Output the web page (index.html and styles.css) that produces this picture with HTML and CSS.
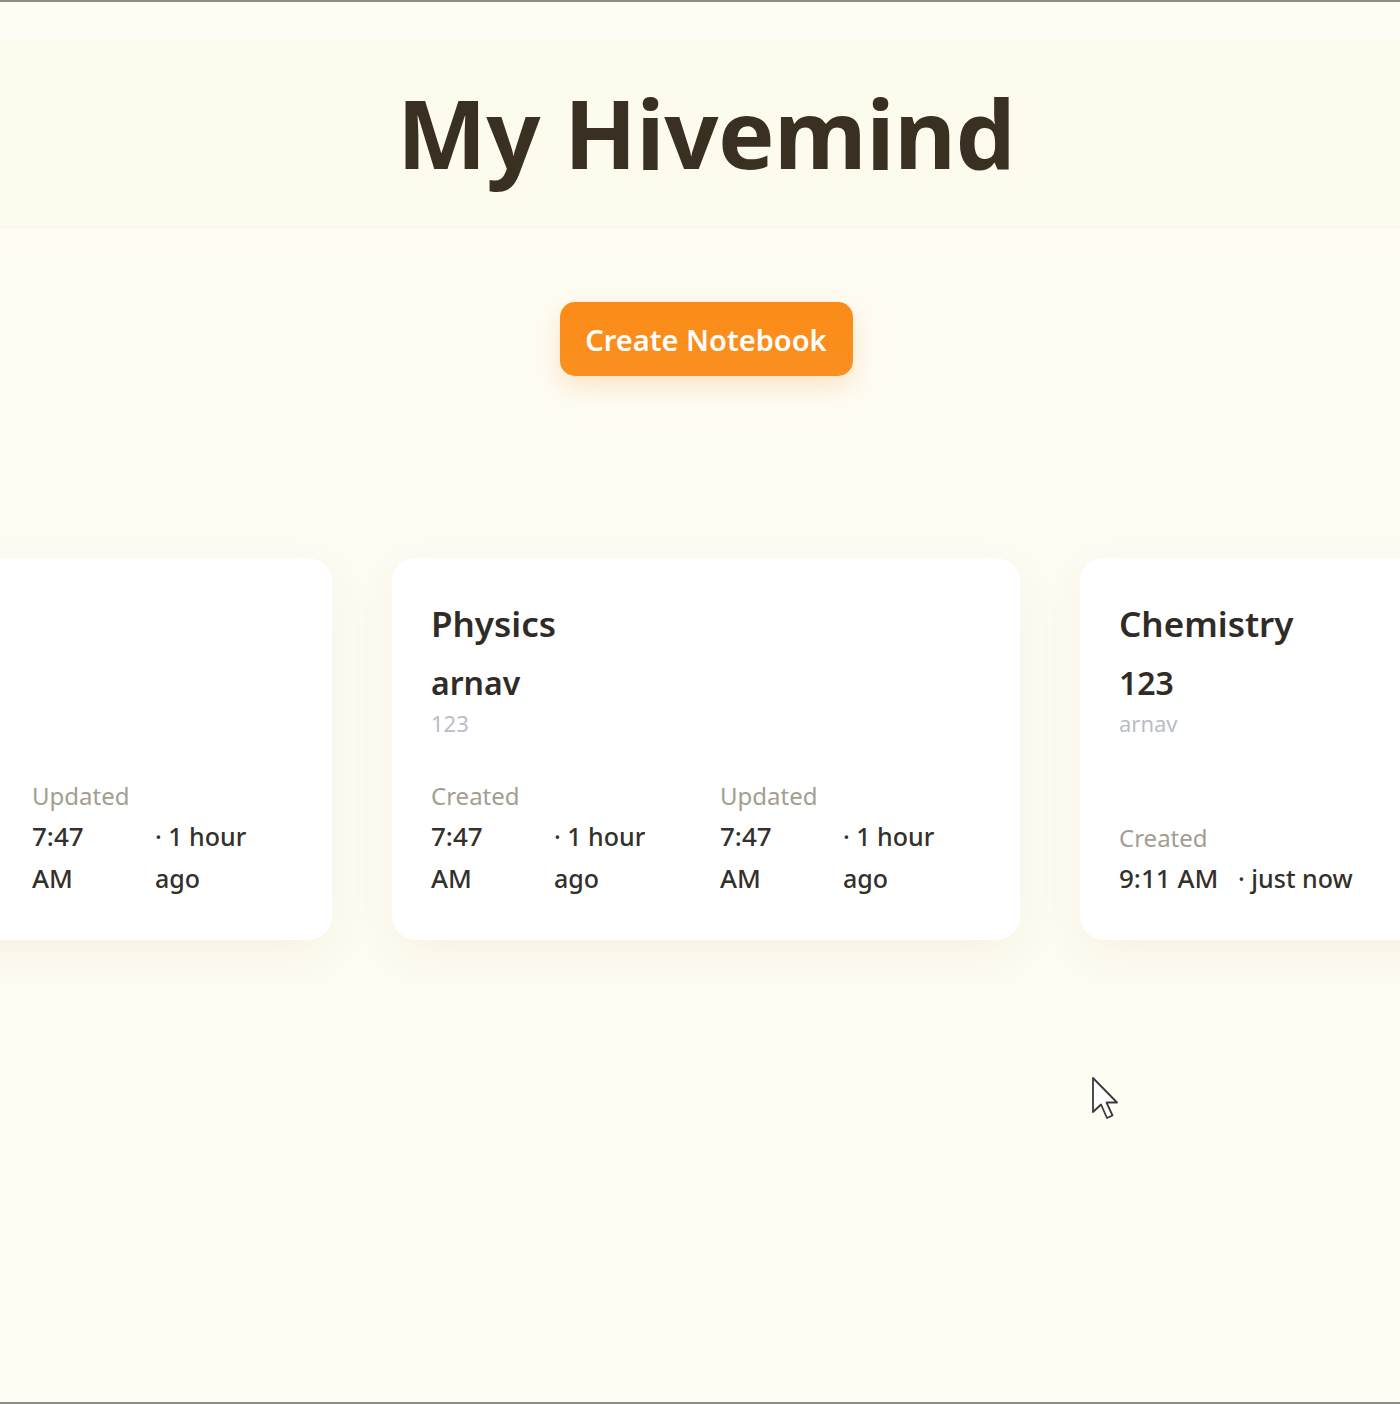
FILE: index.html
```html
<!DOCTYPE html>
<html lang="en">
<head>
<meta charset="utf-8">
<title>My Hivemind</title>
<link rel="stylesheet" href="styles.css">
</head>
<body>
<div class="page">
  <header class="hero">
    <h1 class="hero-title">My Hivemind</h1>
  </header>
  <main class="main">
    <div class="actions">
      <button class="btn-create">Create Notebook</button>
    </div>
    <section class="carousel">
      <article class="card">
        <div class="meta">
          <div class="meta-col"></div>
          <div class="meta-col">
            <div class="meta-label">Updated</div>
            <div class="meta-row">
              <span class="meta-time narrow">7:47 AM</span>
              <span class="meta-rel narrow">· 1 hour ago</span>
            </div>
          </div>
        </div>
      </article>
      <article class="card">
        <h2 class="card-title">Physics</h2>
        <div class="card-sub">arnav</div>
        <div class="card-note">123</div>
        <div class="meta">
          <div class="meta-col">
            <div class="meta-label">Created</div>
            <div class="meta-row">
              <span class="meta-time narrow">7:47 AM</span>
              <span class="meta-rel narrow">· 1 hour ago</span>
            </div>
          </div>
          <div class="meta-col">
            <div class="meta-label">Updated</div>
            <div class="meta-row">
              <span class="meta-time narrow">7:47 AM</span>
              <span class="meta-rel narrow">· 1 hour ago</span>
            </div>
          </div>
        </div>
      </article>
      <article class="card">
        <h2 class="card-title">Chemistry</h2>
        <div class="card-sub">123</div>
        <div class="card-note">arnav</div>
        <div class="meta">
          <div class="meta-col">
            <div class="meta-label">Created</div>
            <div class="meta-row">
              <span class="meta-time wide">9:11 AM</span>
              <span class="meta-rel">· just now</span>
            </div>
          </div>
        </div>
      </article>
    </section>
  </main>
  <svg class="cursor" width="34" height="48" viewBox="0 0 34 48" aria-hidden="true">
    <path d="M2 2 L2 36 L10 28.5 L16 42 L21.5 39.5 L15.5 26.5 L26 26.5 Z" fill="#ffffff" stroke="#3a3a3a" stroke-width="1.8" stroke-linejoin="round"/>
  </svg>
</div>
</body>
</html>
```

FILE: styles.css
```css
* { box-sizing: border-box; }

html, body {
  margin: 0;
  padding: 0;
}

body {
  background: #fefcf3;
  font-family: "Noto Sans", "Open Sans", "DejaVu Sans", sans-serif;
  color: #3a3630;
}

.page {
  position: relative;
  height: 1404px;
  border-top: 2px solid #8d8d85;
  border-bottom: 2px solid #8d8d85;
  overflow: hidden;
  padding-left: 12px;
}

.hero {
  margin-top: 38px;
  height: 188px;
  background: #fdfaee;
  border-bottom: 1px solid #faf7ea;
  padding-top: 45px;
  text-align: center;
  margin-left: -12px;
  padding-left: 12px;
}

.hero-title {
  margin: 0;
  font-size: 95px;
  line-height: 1;
  font-weight: 700;
  color: #3a3022;
  letter-spacing: -0.5px;
}

.main {
  display: flex;
  flex-direction: column;
  align-items: center;
}

.actions {
  margin-top: 74px;
  display: flex;
  justify-content: center;
}

.btn-create {
  width: 293px;
  height: 74px;
  border: none;
  border-radius: 15px;
  background: linear-gradient(180deg, #fa8b18 0%, #fb9020 100%);
  color: #ffffff;
  font-family: inherit;
  font-size: 29px;
  font-weight: 600;
  box-shadow: 0 10px 24px rgba(240, 140, 40, 0.22);
  cursor: pointer;
}

.carousel {
  margin-top: 182px;
  width: 100%;
  display: flex;
  justify-content: center;
  gap: 60px;
}

.card {
  flex: 0 0 628px;
  height: 382px;
  background: #ffffff;
  border-radius: 24px;
  box-shadow: 0 14px 44px rgba(170, 140, 80, 0.09);
  padding: 45px 40px 41px 39px;
  display: flex;
  flex-direction: column;
}

.card-title {
  margin: 0;
  font-size: 35px;
  line-height: 42px;
  font-weight: 600;
  color: #2f2b26;
}

.card-sub {
  margin-top: 18px;
  font-size: 32px;
  line-height: 40px;
  font-weight: 600;
  color: #2f2b26;
}

.card-note {
  margin-top: 5px;
  font-size: 22px;
  line-height: 30px;
  color: #b9bdc8;
}

.meta {
  margin-top: auto;
  display: grid;
  grid-template-columns: 259px 259px;
  column-gap: 30px;
}

.meta-label {
  font-size: 24px;
  line-height: 30px;
  color: #a39e92;
  margin-bottom: 4px;
}

.meta-row {
  display: flex;
  align-items: flex-start;
}

.meta-time {
  font-size: 26px;
  line-height: 42px;
  font-weight: 500;
  color: #34302b;
}

.meta-time.narrow {
  width: 92px;
  margin-right: 31px;
}

.meta-time.wide {
  width: 119px;
}

.meta-rel {
  font-size: 25px;
  line-height: 42px;
  font-weight: 500;
  color: #34302b;
}

.meta-rel.narrow {
  width: 112px;
}

.cursor {
  position: absolute;
  left: 1091px;
  top: 1074px;
}
```
